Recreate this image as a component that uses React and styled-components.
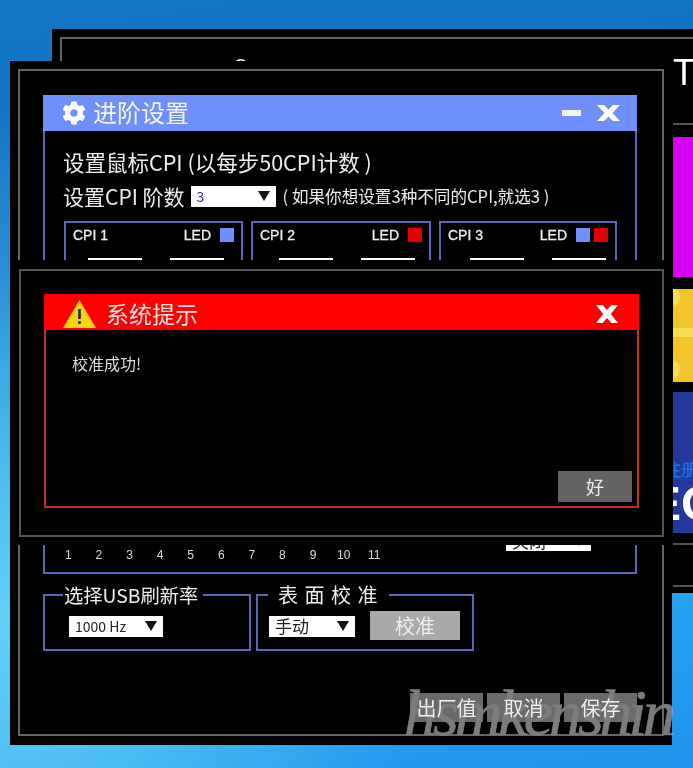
import React from "react";
import styled, { createGlobalStyle } from "styled-components";
import { FaCog } from "react-icons/fa";

const sans = `"Noto Sans CJK SC", "Liberation Sans", sans-serif`;
const blue = "#6f8ffa";
const line = "#5a66b8";
const grey = "#666";

const GlobalStyle = createGlobalStyle`
  html, body {
    margin: 0;
    padding: 0;
    background: #1a90ea;
    overflow: hidden;
  }
  * { box-sizing: border-box; }
`;

const CloseIcon = ({ w = 23, h = 16 }) => (
  <svg width={w} height={h} viewBox="0 0 23 16" preserveAspectRatio="none">
    <path d="M0 0h7l4.500 4.500L16 0h7l-7.500 8L23 16h-7l-4.500-4.500L7 16H0l7.500-8z" fill="#fff" />
  </svg>
);

const WarnIcon = () => (
  <svg width="33" height="28" viewBox="0 0 33 28">
    <path d="M16.500 0L33 28H0z" fill="#f6d512" />
    <rect x="15.200" y="9" width="2.600" height="10" fill="#222" />
    <rect x="15.200" y="21" width="2.600" height="3" fill="#222" />
  </svg>
);

const App = () => (
  <Desktop>
    <GlobalStyle />

    <BackWindow>
      <BackFrame>
        <PeekTitle>o</PeekTitle>
        <Sidebar>
          <SideHead>T</SideHead>
          <Tile $bg="#d800f8" $h={140} $mt={12} />
          <YellowTile />
          <BlueTile>
            <TileSub>注册</TileSub>
            <TileBig>EO</TileBig>
          </BlueTile>
          <SideRule $mt={10} />
          <SideRule $mt={40} />
        </Sidebar>
      </BackFrame>
    </BackWindow>

    <MainWindow>
      <MainFrame>
        <PanelHeader>
          <FaCog size={24} color="#fff" />
          <PanelTitle>进阶设置</PanelTitle>
          <Minimize />
          <CloseIcon />
        </PanelHeader>
        <PanelBody>
          <Heading>设置鼠标CPI (以每步50CPI计数 )</Heading>
          <StageRow>
            <StageLabel>设置CPI 阶数</StageLabel>
            <Select $w={85} $ml={6}>
              <SelectValue $blue>3</SelectValue>
              <Arrow />
            </Select>
            <Note>( 如果你想设置3种不同的CPI,就选3 )</Note>
          </StageRow>
          <CpiRow>
            <CpiBox $w={179}>
              <CpiHead>
                <span>CPI 1</span>
                <Led>LED<Swatch $c={blue} /></Led>
              </CpiHead>
              <CpiInputs $pr={10}><CpiInput /><CpiInput /></CpiInputs>
            </CpiBox>
            <CpiBox $w={180}>
              <CpiHead>
                <span>CPI 2</span>
                <Led>LED<Swatch $c="#e00000" /></Led>
              </CpiHead>
              <CpiInputs $pr={7}><CpiInput /><CpiInput /></CpiInputs>
            </CpiBox>
            <CpiBox $w={178}>
              <CpiHead>
                <span>CPI 3</span>
                <Led>LED<Swatch $c={blue} /><Swatch $c="#e00000" /></Led>
              </CpiHead>
              <CpiInputs $pr={2}><CpiInput /><CpiInput /></CpiInputs>
            </CpiBox>
          </CpiRow>
          <TickRow>
            <Ticks>
              {[1, 2, 3, 4, 5, 6, 7, 8, 9, 10, 11].map((n) => (
                <Tick key={n}>{n}</Tick>
              ))}
            </Ticks>
            <Select $w={85} $ml="auto" $mr={44} $mb={11}>
              <SelectValue $size={17}>关闭</SelectValue>
              <Arrow />
            </Select>
          </TickRow>
        </PanelBody>
        <FieldRow>
          <Field $w={208}>
            <FieldLegend $ml={18} $pl={1} $pr={5}>选择USB刷新率</FieldLegend>
            <FieldContent $pl={24}>
              <Select $w={94}>
                <SelectValue>1000 Hz</SelectValue>
                <Arrow />
              </Select>
            </FieldContent>
          </Field>
          <Field $w={218}>
            <SpacedLegend $ml={10} $pl={10} $pr={11}>表 面 校 准</SpacedLegend>
            <FieldContent $pl={11}>
              <Select $w={86}>
                <SelectValue $size={17}>手动</SelectValue>
                <Arrow />
              </Select>
              <CalibrateButton>校准</CalibrateButton>
            </FieldContent>
          </Field>
        </FieldRow>
        <Footer>
          <FooterButton>出厂值</FooterButton>
          <FooterButton>取消</FooterButton>
          <FooterButton>保存</FooterButton>
        </Footer>
      </MainFrame>
    </MainWindow>

    <AlertWindow>
      <AlertFrame>
        <AlertHeader>
          <WarnIcon />
          <AlertTitle>系统提示</AlertTitle>
          <CloseIcon w={22} h={18} />
        </AlertHeader>
        <AlertBody>
          <Message>校准成功!</Message>
          <OkButton>好</OkButton>
        </AlertBody>
      </AlertFrame>
    </AlertWindow>

    <Watermark>hsmkenshin</Watermark>
  </Desktop>
);

const Desktop = styled.div`
  position: relative;
  width: 693px;
  height: 768px;
  overflow: hidden;
  font-family: ${sans};
  color: #eee;
  background:
    radial-gradient(ellipse 420px 520px at 0px 620px, #63cdf6 0%, rgba(99, 205, 246, 0) 100%),
    linear-gradient(170deg, #1478c6 0%, #0f6fc4 30%, #2aa6f2 75%, #1d94ee 100%);
`;

/* windows on the desktop */
const BackWindow = styled.div`
  position: absolute;
  left: 52px;
  top: 29px;
  width: 680px;
  height: 564px;
  padding: 8px 0 0 8px;
  background: #000;
`;

const BackFrame = styled.div`
  position: relative;
  display: flex;
  height: 100%;
  border-top: 2px solid ${grey};
  border-left: 2px solid ${grey};
  padding-left: 611px;
`;

const PeekTitle = styled.span`
  position: absolute;
  left: 172px;
  top: 11px;
  font: 24px "Liberation Sans", sans-serif;
  color: #fff;
`;

const Sidebar = styled.div`
  display: flex;
  flex-direction: column;
  width: 60px;
`;

const SideHead = styled.div`
  height: 86px;
  padding-top: 16px;
  border-bottom: 2px solid #555;
  font: 36px/36px "Liberation Sans", sans-serif;
  color: #fff;
`;

const Tile = styled.div`
  height: ${(p) => p.$h}px;
  margin-top: ${(p) => p.$mt}px;
  background: ${(p) => p.$bg};
`;

const YellowTile = styled.div`
  height: 93px;
  margin-top: 12px;
  background:
    linear-gradient(#fbdc55, #fbdc55) 0 39px / 100% 9px no-repeat,
    radial-gradient(ellipse 7px 10px at 1px 8px, #fbdc55 70%, transparent 100%),
    radial-gradient(ellipse 7px 10px at 1px 80px, #fbdc55 70%, transparent 100%),
    #f2c42c;
`;

const BlueTile = styled.div`
  height: 141px;
  margin-top: 10px;
  padding-top: 67px;
  background: #24399c;
  overflow: hidden;
`;

const TileSub = styled.div`
  margin-left: -9px;
  font-size: 17px;
  line-height: 20px;
  font-weight: 500;
  color: #1a6ff0;
`;

const TileBig = styled.div`
  margin: 2px 0 0 -24px;
  font: bold 48px/46px "Liberation Sans", sans-serif;
  color: #fff;
`;

const SideRule = styled.div`
  height: 2px;
  margin-top: ${(p) => p.$mt}px;
  background: #555;
`;

const MainWindow = styled.div`
  position: absolute;
  left: 10px;
  top: 61px;
  width: 662px;
  height: 684px;
  padding: 8px;
  background: #000;
`;

const MainFrame = styled.div`
  width: 646px;
  height: 667px;
  padding: 24px 25px 0 23px;
  border: 2px solid ${grey};
`;

const PanelHeader = styled.div`
  display: flex;
  align-items: center;
  height: 36px;
  padding: 0 17px 0 19px;
  background: ${blue};
`;

const PanelTitle = styled.div`
  flex: 1;
  margin-left: 7px;
  font-size: 24px;
  line-height: 34px;
  height: 36px;
  color: #f4f4f4;
`;

const Minimize = styled.div`
  width: 19px;
  height: 6px;
  margin-right: 16px;
  background: #f4f4f4;
`;

const PanelBody = styled.div`
  display: flex;
  flex-direction: column;
  height: 443px;
  padding: 17px 18px 10px 18px;
  border: 2px solid ${line};
  border-top: 0;
`;

const Heading = styled.div`
  font-size: 21.500px;
  line-height: 28px;
  white-space: nowrap;
`;

const StageRow = styled.div`
  display: flex;
  align-items: center;
  height: 30px;
  margin-top: 5px;
`;

const StageLabel = styled.span`
  font-size: 21px;
  white-space: nowrap;
`;

const Note = styled.span`
  margin-left: 7px;
  font-size: 16.600px;
  white-space: nowrap;
`;

const Select = styled.div`
  display: flex;
  align-items: center;
  justify-content: space-between;
  flex: none;
  width: ${(p) => p.$w}px;
  height: 21px;
  margin-left: ${(p) => (p.$ml === "auto" ? "auto" : `${p.$ml || 0}px`)};
  margin-right: ${(p) => p.$mr || 0}px;
  margin-bottom: ${(p) => p.$mb || 0}px;
  padding: 0 6px;
  background: #fff;
`;

const SelectValue = styled.span`
  font-size: ${(p) => p.$size || 14}px;
  line-height: 20px;
  color: ${(p) => (p.$blue ? "#2a2ab0" : "#222")};
`;

const Arrow = styled.i`
  width: 0;
  height: 0;
  border-left: 6px solid transparent;
  border-right: 6px solid transparent;
  border-top: 10px solid #111;
`;

const CpiRow = styled.div`
  display: flex;
  gap: 8px;
  margin: 10px 0 0 1px;
`;

const CpiBox = styled.div`
  width: ${(p) => p.$w}px;
  height: 80px;
  padding: 2px 7px;
  border: 2px solid ${line};
`;

const CpiHead = styled.div`
  display: flex;
  align-items: center;
  justify-content: space-between;
  height: 20px;
  font: 14px "Liberation Sans", sans-serif;
  -webkit-text-stroke: 0.3px #eee;
`;

const Led = styled.span`
  display: flex;
  align-items: center;
  gap: 3px;
  & > i:first-child { margin-left: 6px; }
`;

const Swatch = styled.i`
  width: 14px;
  height: 14px;
  margin-left: 1px;
  background: ${(p) => p.$c};
`;

const CpiInputs = styled.div`
  display: flex;
  justify-content: flex-end;
  gap: 28px;
  margin-top: 13px;
  padding-right: ${(p) => p.$pr}px;
`;

const CpiInput = styled.div`
  width: 54px;
  height: 3px;
  background: #fff;
`;

const TickRow = styled.div`
  display: flex;
  align-items: flex-end;
  margin-top: auto;
  margin-right: -18px;
`;

const Ticks = styled.div`
  display: flex;
  margin-left: -10px;
`;

const Tick = styled.span`
  width: 30.600px;
  font: 12px/14px "Liberation Sans", sans-serif;
  text-align: center;
  color: #ddd;
`;

const FieldRow = styled.div`
  display: flex;
  gap: 5px;
  margin-top: 9px;
`;

const Field = styled.fieldset`
  width: ${(p) => p.$w}px;
  height: 68px;
  margin: 0;
  padding: 0;
  border: 2px solid ${line};
`;

const FieldLegend = styled.legend`
  margin-left: ${(p) => p.$ml}px;
  padding: 0 ${(p) => p.$pr}px 0 ${(p) => p.$pl}px;
  font-size: 19.300px;
  line-height: 24px;
  white-space: nowrap;
`;

const SpacedLegend = styled(FieldLegend)`
  font-size: 20px;
  letter-spacing: 1px;
`;

const FieldContent = styled.div`
  display: flex;
  align-items: center;
  gap: 15px;
  height: 30px;
  margin-top: 4px;
  padding-left: ${(p) => p.$pl}px;
`;

const CalibrateButton = styled.div`
  width: 90px;
  height: 29px;
  margin-bottom: 2px;
  background: #a9a9a9;
  font-size: 20px;
  line-height: 29px;
  text-align: center;
  color: #eee;
`;

const Footer = styled.div`
  display: flex;
  justify-content: flex-end;
  gap: 4px;
  margin-top: 42px;
`;

const FooterButton = styled.div`
  width: 73px;
  height: 29px;
  background: #6a6a6a;
  font-size: 20px;
  line-height: 29px;
  text-align: center;
  color: #f0f0f0;
`;

const AlertWindow = styled.div`
  position: absolute;
  left: 10px;
  top: 260px;
  width: 662px;
  height: 285px;
  padding: 9px 8px 8px 9px;
  background: #000;
`;

const AlertFrame = styled.div`
  height: 100%;
  padding: 23px 23px 0 23px;
  border: 2px solid #555;
`;

const AlertHeader = styled.div`
  display: flex;
  align-items: center;
  height: 36px;
  padding: 3px 21px 0 19px;
  background: #fe0000;
`;

const AlertTitle = styled.div`
  flex: 1;
  margin-left: 10px;
  font-size: 23px;
  line-height: 33px;
  color: #f8e4e4;
`;

const AlertBody = styled.div`
  display: flex;
  flex-direction: column;
  height: 178px;
  padding: 21px 5px 4px 26px;
  border: 2px solid #c0301e;
  border-top: 0;
`;

const Message = styled.div`
  font-size: 16px;
  line-height: 24px;
  color: #ddd;
`;

const OkButton = styled.div`
  align-self: flex-end;
  width: 74px;
  height: 31px;
  margin-top: auto;
  background: #636363;
  font-size: 18px;
  line-height: 31px;
  text-align: center;
  color: #eee;
`;

/* photographer's mark stamped over the picture */
const Watermark = styled.div`
  position: absolute;
  left: 404px;
  top: 673px;
  font: italic 66px/80px "Liberation Serif", serif;
  letter-spacing: -4px;
  color: #7c7c7c;
  -webkit-text-stroke: 0.7px #7c7c7c;
  mix-blend-mode: lighten;
  white-space: nowrap;
`;

export default App;
